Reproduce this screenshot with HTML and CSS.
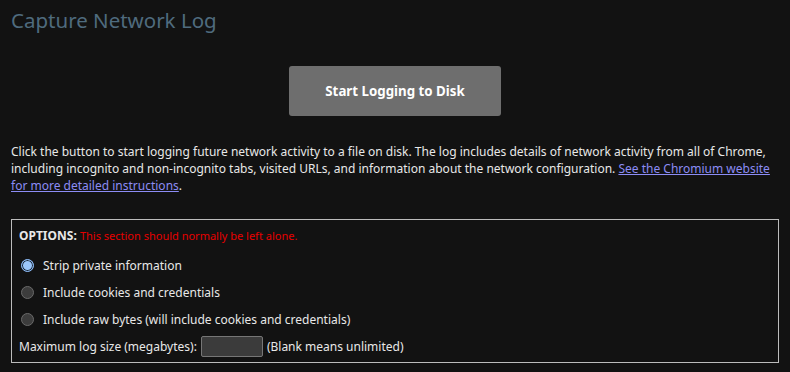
FILE: index.html
```html
<!DOCTYPE html>
<html lang="en">
<head>
    <meta charset="UTF-8">
    <title>Capture Network Log</title>
    <link rel="stylesheet" href="styles.css">
</head>
<body>
    <h1 class="title">Capture Network Log</h1>

    <div class="start-area">
        <button type="button" class="start-button">Start Logging to Disk</button>
    </div>

    <p class="intro">
        Click the button to start logging future network activity to a file on disk. The log includes details of network activity from all of Chrome, including incognito and non-incognito tabs, visited URLs, and information about the network configuration.
        <a href="#">See the Chromium website for more detailed instructions</a>.
    </p>

    <!-- capture options -->
    <div class="options">
        <div class="options-head">
            <b>OPTIONS:</b> <span class="warning">This section should normally be left alone.</span>
        </div>
        <label class="option"><input type="radio" name="mode" checked> Strip private information</label>
        <label class="option"><input type="radio" name="mode"> Include cookies and credentials</label>
        <label class="option"><input type="radio" name="mode"> Include raw bytes (will include cookies and credentials)</label>
        <div class="size-row">
            Maximum log size (megabytes): <input type="text" class="size-input"> (Blank means unlimited)
        </div>
    </div>
</body>
</html>
```

FILE: styles.css
```css
* {
  box-sizing: border-box;
}

body {
  background: #121212;
  color: #e8e8e8;
  font-family: "Noto Sans", "Open Sans", sans-serif;
  font-size: 12px;
  margin: 0;
  padding: 0 11px;
}

.title {
  color: #4f6b7e;
  font-size: 20.5px;
  font-weight: normal;
  margin: 0;
  padding-top: 6px;
  height: 40px;
}

.start-area {
  display: flex;
  justify-content: center;
  padding-top: 26px;
}

.start-button {
  width: 212px;
  height: 50px;
  background: #6e6e6e;
  border: none;
  border-radius: 3px;
  color: #fff;
  font-family: inherit;
  font-size: 13.3px;
  font-weight: bold;
}

.intro {
  line-height: 17px;
  margin: 27px 0 0;
}

.intro a {
  color: #8c8cf5;
}

.options {
  border: 1px solid #bcbcbc;
  margin-top: 25px;
  padding: 7px 7px 3px;
}

.options-head {
  line-height: 17px;
  margin-bottom: 8px;
}

.warning {
  color: #e60000;
  font-size: 11px;
}

.option {
  display: flex;
  align-items: center;
  height: 27px;
}

/* dark radio buttons */
.option input {
  appearance: none;
  margin: 0 9px 0 2px;
  width: 13px;
  height: 13px;
  border-radius: 50%;
  border: 1px solid #6a6a6a;
  background: #3c3c3c;
}

.option input:checked {
  border: 1px solid #8ab8f5;
  background: #9cc7fb;
  box-shadow: inset 0 0 0 1px #1c2a3a;
}

.size-row {
  display: flex;
  align-items: center;
  gap: 4px;
  height: 26px;
}

.size-input {
  width: 62px;
  height: 21px;
  background: #3b3b3b;
  border: 1px solid #767676;
  border-radius: 2px;
  color: #fff;
}
```
